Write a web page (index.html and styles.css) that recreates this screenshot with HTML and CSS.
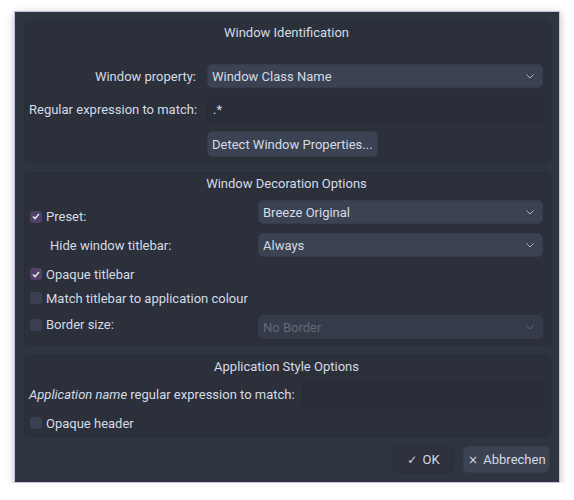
FILE: index.html
```html
<!DOCTYPE html>
<html lang="en">

<head>
    <meta charset="UTF-8">
    <meta name="viewport" content="width=device-width, initial-scale=1.0">
    <title>Window Rule</title>
    <link rel="stylesheet" href="styles.css">
</head>

<body>
    <div class="dialog">
        <!-- window matching -->
        <div class="group group-ident">
            <div class="group-title">Window Identification</div>
            <div class="form-grid ident-grid">
                <label class="row-label">Window property:</label>
                <div class="combo">
                    <span>Window Class Name</span>
                    <svg class="chevron" width="8" height="5" viewBox="0 0 8 5"><path d="M0.5 0.5 L4 4 L7.5 0.5" fill="none" stroke="#aab2c0" stroke-width="1"/></svg>
                </div>

                <label class="row-label">Regular expression to match:</label>
                <div class="field">.*</div>

                <span></span>
                <div><button class="push">Detect Window Properties...</button></div>
            </div>
        </div>

        <!-- decoration -->
        <div class="group group-deco">
            <div class="group-title">Window Decoration Options</div>
            <div class="form-grid deco-grid">
                <label class="check"><span class="box checked"><svg width="8" height="7" viewBox="0 0 8 7"><path d="M1 3.6 L3 5.6 L7 1" fill="none" stroke="#eceff4" stroke-width="1.4"/></svg></span>Preset:</label>
                <div class="combo">
                    <span>Breeze Original</span>
                    <svg class="chevron" width="8" height="5" viewBox="0 0 8 5"><path d="M0.5 0.5 L4 4 L7.5 0.5" fill="none" stroke="#aab2c0" stroke-width="1"/></svg>
                </div>

                <label class="row-label indent">Hide window titlebar:</label>
                <div class="combo last">
                    <span>Always</span>
                    <svg class="chevron" width="8" height="5" viewBox="0 0 8 5"><path d="M0.5 0.5 L4 4 L7.5 0.5" fill="none" stroke="#aab2c0" stroke-width="1"/></svg>
                </div>

                <label class="check wide"><span class="box checked"><svg width="8" height="7" viewBox="0 0 8 7"><path d="M1 3.6 L3 5.6 L7 1" fill="none" stroke="#eceff4" stroke-width="1.4"/></svg></span>Opaque titlebar</label>

                <label class="check wide"><span class="box"></span>Match titlebar to application colour</label>

                <label class="check"><span class="box"></span>Border size:</label>
                <div class="combo disabled">
                    <span>No Border</span>
                    <svg class="chevron" width="8" height="5" viewBox="0 0 8 5"><path d="M0.5 0.5 L4 4 L7.5 0.5" fill="none" stroke="#5a6172" stroke-width="1"/></svg>
                </div>
            </div>
        </div>

        <!-- application style -->
        <div class="group group-app">
            <div class="group-title">Application Style Options</div>
            <div class="app-row">
                <label><em>Application name</em> regular expression to match:</label>
                <div class="field"></div>
            </div>
            <label class="check"><span class="box"></span>Opaque header</label>
        </div>

        <div class="buttons">
            <button class="push flat"><span class="glyph">&#10003;</span> OK</button>
            <button class="push"><span class="glyph">&times;</span> Abbrechen</button>
        </div>
    </div>
</body>

</html>
```

FILE: styles.css
```css
/* page */
body {
    margin: 0;
    padding: 11px 0 0 14px;
    background-color: #ffffff;
    font-family: Roboto, "Noto Sans", sans-serif;
    font-size: 13px;
    color: #d5dbe5;
    white-space: nowrap;
}

/* dialog window */
.dialog {
    box-sizing: border-box;
    width: 546px;
    height: 472px;
    padding: 9px 8px 9px 9px;
    background-color: #2e3440;
    border: 1px solid #c9bedf;
    box-shadow: 0 2px 8px rgba(0, 0, 0, 0.25);
    display: flex;
    flex-direction: column;
    gap: 9px;
}

/* group boxes */
.group {
    background-color: #2b303b;
    border: 1px solid #292d37;
    border-radius: 6px;
    padding: 0 6px 0 4px;
    box-sizing: border-box;
}

.group-title {
    text-align: center;
    height: 21px;
    line-height: 21px;
}

.group-ident {
    height: 142px;
}

.group-deco {
    height: 174px;
}

.group-app {
    height: 82px;
}

.form-grid {
    display: grid;
    align-items: center;
}

.ident-grid {
    grid-template-columns: 167px 336px;
    column-gap: 11px;
    row-gap: 9px;
    margin-top: 21px;
}

.ident-grid .row-label {
    text-align: right;
}

.deco-grid {
    grid-template-columns: 223px 285px;
    column-gap: 6px;
    margin-top: 6px;
}

.deco-grid .combo {
    margin-bottom: 9px;
}

.deco-grid .combo.last {
    margin-bottom: 5px;
}

.deco-grid .check.wide {
    grid-column: 1 / 3;
    height: 24px;
}

.deco-grid .combo.disabled {
    margin-top: 5px;
    margin-bottom: 0;
}

.row-label.indent {
    padding-left: 21px;
    margin-bottom: 5px;
}

/* combo boxes */
.combo {
    height: 24px;
    box-sizing: border-box;
    background-color: #3b4252;
    border: 1px solid #363c4a;
    border-radius: 5px;
    padding: 0 8px 0 4px;
    display: flex;
    align-items: center;
    justify-content: space-between;
}

.combo.disabled {
    color: #636a7a;
    background-color: #353b48;
}

.chevron {
    display: block;
}

/* line edits */
.field {
    height: 25px;
    box-sizing: border-box;
    background-color: #292e38;
    border: 1px solid #262a33;
    border-radius: 5px;
    padding: 0 5px;
    line-height: 23px;
}

/* buttons */
.push {
    font-family: inherit;
    font-size: 13px;
    color: #d5dbe5;
    background-color: #3b4252;
    border: 1px solid #363c4a;
    border-radius: 5px;
    height: 26px;
    padding: 0 4px;
    white-space: nowrap;
    cursor: pointer;
}

.push.flat {
    background-color: #2c313c;
    border-color: #2a2e38;
}

.glyph {
    font-family: "DejaVu Sans", sans-serif;
    font-size: 12px;
    margin-right: 2px;
}

/* checkboxes */
.check {
    display: flex;
    align-items: center;
    gap: 4px;
    padding-left: 1px;
}

.box {
    width: 12px;
    height: 12px;
    border-radius: 3px;
    background-color: #3a404f;
    display: flex;
    align-items: center;
    justify-content: center;
}

.box.checked {
    background-color: #4f4168;
}

/* application style group */
.app-row {
    display: flex;
    align-items: center;
    gap: 7px;
    margin-top: 5px;
    margin-bottom: 5px;
}

.app-row .field {
    flex: 1;
}

.group-app .check {
    height: 22px;
}

/* dialog buttons */
.buttons {
    display: flex;
    justify-content: flex-end;
    gap: 9px;
    margin-right: 1px;
}

.buttons .push {
    height: 27px;
}

.buttons .flat {
    width: 61px;
}

.buttons .push:last-child {
    width: 87px;
}
```
